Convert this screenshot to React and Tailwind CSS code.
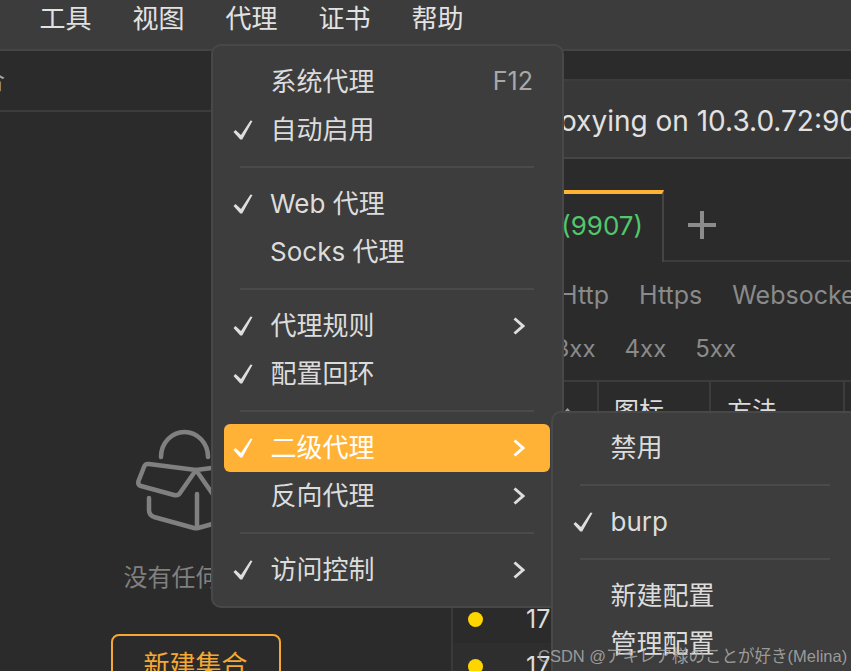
const FONT = "font-['Inter','Noto_Sans_CJK_SC',sans-serif]";

function Check({ white }) {
  return (
    <svg width="20" height="20" viewBox="0 0 20 20" className="shrink-0">
      <path d="M0.5 12 L2.5 10 L8 15 L17.5 0.5 L19.5 1 L9.2 19.5 L7.3 19.5 Z" fill={white ? "#ffffff" : "#dedede"} />
    </svg>
  );
}

function Chevron({ white }) {
  return (
    <svg width="12" height="18" viewBox="0 0 12 18" className="shrink-0">
      <path d="M1.5 1.5 L10 9 L1.5 16.5" fill="none" stroke={white ? "#ffffff" : "#dedede"} strokeWidth="3" />
    </svg>
  );
}

function Item({ label, checked, arrow, shortcut, active, latin }) {
  return (
    <div className={`flex items-center h-12 rounded-md pl-[9px] ${active ? "bg-[#ffb235] text-white" : "text-[#dcdcdc]"}`}>
      <div className={`w-5 flex justify-center ${latin ? "mr-[17px]" : "mr-[17.5px]"}`}>{checked ? <Check white={active} /> : null}</div>
      <span className="flex-1 whitespace-nowrap pb-0.5">{label}</span>
      {shortcut ? <span className="text-[#a8a8a8] text-[25px] mr-[17px]">{shortcut}</span> : null}
      {arrow ? <div className="mr-[25px] flex"><Chevron white={active} /></div> : null}
    </div>
  );
}

function Sep() {
  return (
    <div className="h-[26px] flex items-center mx-4">
      <div className="h-0.5 w-full bg-[#4a4a4a]" />
    </div>
  );
}

function BoxIcon() {
  return (
    <svg width="120" height="102" viewBox="135 428 120 102" fill="none" stroke="#808080" strokeWidth="4.5" strokeLinecap="round" strokeLinejoin="round">
      <path d="M160 456 A 23.5 25 0 0 1 207 456" />
      <path d="M195 469 L148 463 Q144 462.5 143 466 L137.5 480 Q136.5 484 140 485 L173 494 Q177 495 179 492 Z" />
      <path d="M195 469 L242 463 Q246 462.5 247 466 L252.5 480 Q253.5 484 250 485 L217 494 Q213 495 211 492 Z" />
      <path d="M148 497 L148 509 Q148 514 153 516 L193 527 Q195 527.5 197 527 L237 516 Q242 514 242 509 L242 497" />
      <path d="M196 493 L196 526" />
    </svg>
  );
}

function Row({ bg }) {
  return (
    <div className={`h-[47px] shrink-0 flex items-center ${bg}`}>
      <span className="ml-[15px] w-[15px] h-[15px] rounded-full bg-[#ffd500]" />
      <span className="ml-[43px] text-[25px] text-[#dcdcdc] whitespace-nowrap">172.16.0.1</span>
    </div>
  );
}

export default function App() {
  return (
    <div className={`relative w-[851px] h-[671px] overflow-hidden bg-[#2b2b2b] flex flex-col ${FONT} text-[26px]`}>
      <div className="h-[51px] shrink-0 bg-[#3c3c3c] border-b-2 border-[#454545] flex items-start pl-[39.5px] gap-[41px] text-[#e2e2e2] leading-[38px]">
        <span>工具</span>
        <span>视图</span>
        <span>代理</span>
        <span>证书</span>
        <span>帮助</span>
      </div>

      <div className="flex-1 flex min-h-0">
        <div className="-ml-[60px] w-[513px] shrink-0 border-r-2 border-[#3a3a3a] flex flex-col items-center">
          <div className="w-full h-[61px] shrink-0 border-b-2 border-[#3c3c3c] flex items-center pl-[17px] text-[#a8a8a8] text-[24px]">集合</div>
          <div className="mt-[317px] flex"><BoxIcon /></div>
          <div className="mt-[31px] text-[24px] leading-8 text-[#808080] whitespace-nowrap">没有任何集合</div>
          <div className="mt-[40px] w-[170px] h-[60px] shrink-0 border-2 border-[#f5a832] rounded-lg flex justify-center pt-[9px] text-[#f5a832] whitespace-nowrap">新建集合</div>
        </div>

        <div className="flex-1 min-w-0 flex flex-col overflow-hidden">
          <div className="h-[30px] shrink-0 border-b-2 border-[#3c3c3c]" />
          <div className="h-[78px] shrink-0 bg-[#383838] border-b-2 border-[#454545] flex items-center pl-[79px] pt-[4px] text-[28px] text-[#e2e2e2] whitespace-nowrap">Proxying on 10.3.0.72:9090</div>
          <div className="h-[103px] shrink-0 pt-[31px] flex">
            <div className="w-[211px] shrink-0 border-t-4 border-r-2 border-t-[#ffb235] border-r-[#454545] flex items-center justify-end pr-[19px] pb-[6px] text-[#52c76b]">(9907)</div>
            <div className="flex-1 border-b-2 border-[#3c3c3c] flex items-center pl-[24px]">
              <svg width="28" height="28" viewBox="0 0 28 28">
                <path d="M14 0 V28 M0 14 H28" stroke="#8c8c8c" strokeWidth="4" />
              </svg>
            </div>
          </div>
          <div className="h-[62px] shrink-0 flex items-center pl-[106px] gap-[30px] text-[25px] text-[#8a8a8a] pt-1.5 whitespace-nowrap">
            <span>Http</span>
            <span>Https</span>
            <span>Websocket</span>
          </div>
          <div className="h-[56px] shrink-0 flex items-start pl-[101.5px] gap-[29px] text-[24px] text-[#8a8a8a] whitespace-nowrap pt-[7px]">
            <span>3xx</span>
            <span>4xx</span>
            <span>5xx</span>
          </div>
          <div className="h-[216px] shrink-0 border-t-2 border-[#3c3c3c] flex text-[25px] text-[#dcdcdc] whitespace-nowrap">
            <div className="w-[146px] shrink-0 border-r-2 border-[#3c3c3c] flex justify-end items-start pr-[26px] pt-[26px]">
              <svg width="7" height="4" viewBox="0 0 7 4"><path d="M3.5 0 L7 4 H0 Z" fill="#9a9a9a" /></svg>
            </div>
            <div className="w-[112px] shrink-0 border-r-2 border-[#3c3c3c] pl-[15px] pt-[11px]">图标</div>
            <div className="w-[134px] shrink-0 border-r-2 border-[#3c3c3c] pl-[16px] pt-[11px]">方法</div>
          </div>
          <Row bg="bg-[#2b2b2b]" />
          <Row bg="bg-[#2e2e2e]" />
        </div>
      </div>

      <div className="absolute left-[211px] top-[44px] w-[353px] h-[564px] bg-[#3d3d3d] border-2 border-[#484848] rounded-[10px] pl-[11px] pr-3 pt-3">
        <Item label="系统代理" shortcut="F12" />
        <Item label="自动启用" checked />
        <Sep />
        <Item label="Web 代理" checked latin />
        <Item label="Socks 代理" latin />
        <Sep />
        <Item label="代理规则" checked arrow />
        <Item label="配置回环" checked />
        <Sep />
        <Item label="二级代理" checked arrow active />
        <Item label="反向代理" arrow />
        <Sep />
        <Item label="访问控制" checked arrow />
      </div>

      <div className="absolute left-[551px] top-[411px] w-[308px] h-[300px] bg-[#3d3d3d] border-2 border-[#484848] rounded-[10px] px-[11px] pt-[11px]">
        <Item label="禁用" />
        <Sep />
        <Item label="burp" checked />
        <Sep />
        <Item label="新建配置" />
        <Item label="管理配置" />
      </div>

      <div className="absolute left-[538px] top-[646px] text-[16.5px] leading-5 text-[#b4b4b4]/80 whitespace-nowrap font-['Liberation_Sans','Noto_Sans_CJK_JP',sans-serif]">CSDN @アキレア様のことが好き(Melina)</div>
    </div>
  );
}
